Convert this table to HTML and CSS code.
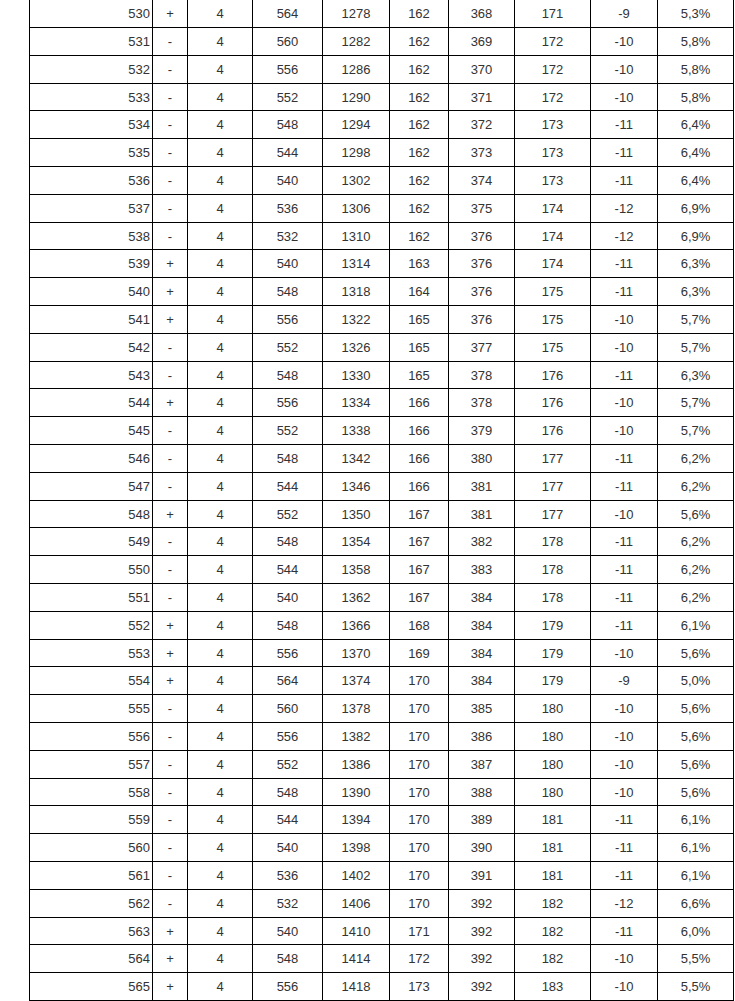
FILE: index.html
```html
<!DOCTYPE html>
<html lang="ru">
<head>
<meta charset="utf-8">
<title>Таблица</title>
<link rel="stylesheet" href="styles.css">
</head>
<body>
<div class="page">
<table class="data">
<colgroup>
<col class="c1"><col class="c2"><col class="c3"><col class="c4"><col class="c5"><col class="c6"><col class="c7"><col class="c8"><col class="c9"><col class="c10">
</colgroup>
<tbody>
<tr><td class="num">530</td><td>+</td><td>4</td><td>564</td><td>1278</td><td>162</td><td>368</td><td>171</td><td>-9</td><td>5,3%</td></tr>
<tr><td class="num">531</td><td>-</td><td>4</td><td>560</td><td>1282</td><td>162</td><td>369</td><td>172</td><td>-10</td><td>5,8%</td></tr>
<tr><td class="num">532</td><td>-</td><td>4</td><td>556</td><td>1286</td><td>162</td><td>370</td><td>172</td><td>-10</td><td>5,8%</td></tr>
<tr><td class="num">533</td><td>-</td><td>4</td><td>552</td><td>1290</td><td>162</td><td>371</td><td>172</td><td>-10</td><td>5,8%</td></tr>
<tr><td class="num">534</td><td>-</td><td>4</td><td>548</td><td>1294</td><td>162</td><td>372</td><td>173</td><td>-11</td><td>6,4%</td></tr>
<tr><td class="num">535</td><td>-</td><td>4</td><td>544</td><td>1298</td><td>162</td><td>373</td><td>173</td><td>-11</td><td>6,4%</td></tr>
<tr><td class="num">536</td><td>-</td><td>4</td><td>540</td><td>1302</td><td>162</td><td>374</td><td>173</td><td>-11</td><td>6,4%</td></tr>
<tr><td class="num">537</td><td>-</td><td>4</td><td>536</td><td>1306</td><td>162</td><td>375</td><td>174</td><td>-12</td><td>6,9%</td></tr>
<tr><td class="num">538</td><td>-</td><td>4</td><td>532</td><td>1310</td><td>162</td><td>376</td><td>174</td><td>-12</td><td>6,9%</td></tr>
<tr><td class="num">539</td><td>+</td><td>4</td><td>540</td><td>1314</td><td>163</td><td>376</td><td>174</td><td>-11</td><td>6,3%</td></tr>
<tr><td class="num">540</td><td>+</td><td>4</td><td>548</td><td>1318</td><td>164</td><td>376</td><td>175</td><td>-11</td><td>6,3%</td></tr>
<tr><td class="num">541</td><td>+</td><td>4</td><td>556</td><td>1322</td><td>165</td><td>376</td><td>175</td><td>-10</td><td>5,7%</td></tr>
<tr><td class="num">542</td><td>-</td><td>4</td><td>552</td><td>1326</td><td>165</td><td>377</td><td>175</td><td>-10</td><td>5,7%</td></tr>
<tr><td class="num">543</td><td>-</td><td>4</td><td>548</td><td>1330</td><td>165</td><td>378</td><td>176</td><td>-11</td><td>6,3%</td></tr>
<tr><td class="num">544</td><td>+</td><td>4</td><td>556</td><td>1334</td><td>166</td><td>378</td><td>176</td><td>-10</td><td>5,7%</td></tr>
<tr><td class="num">545</td><td>-</td><td>4</td><td>552</td><td>1338</td><td>166</td><td>379</td><td>176</td><td>-10</td><td>5,7%</td></tr>
<tr><td class="num">546</td><td>-</td><td>4</td><td>548</td><td>1342</td><td>166</td><td>380</td><td>177</td><td>-11</td><td>6,2%</td></tr>
<tr><td class="num">547</td><td>-</td><td>4</td><td>544</td><td>1346</td><td>166</td><td>381</td><td>177</td><td>-11</td><td>6,2%</td></tr>
<tr><td class="num">548</td><td>+</td><td>4</td><td>552</td><td>1350</td><td>167</td><td>381</td><td>177</td><td>-10</td><td>5,6%</td></tr>
<tr><td class="num">549</td><td>-</td><td>4</td><td>548</td><td>1354</td><td>167</td><td>382</td><td>178</td><td>-11</td><td>6,2%</td></tr>
<tr><td class="num">550</td><td>-</td><td>4</td><td>544</td><td>1358</td><td>167</td><td>383</td><td>178</td><td>-11</td><td>6,2%</td></tr>
<tr><td class="num">551</td><td>-</td><td>4</td><td>540</td><td>1362</td><td>167</td><td>384</td><td>178</td><td>-11</td><td>6,2%</td></tr>
<tr><td class="num">552</td><td>+</td><td>4</td><td>548</td><td>1366</td><td>168</td><td>384</td><td>179</td><td>-11</td><td>6,1%</td></tr>
<tr><td class="num">553</td><td>+</td><td>4</td><td>556</td><td>1370</td><td>169</td><td>384</td><td>179</td><td>-10</td><td>5,6%</td></tr>
<tr><td class="num">554</td><td>+</td><td>4</td><td>564</td><td>1374</td><td>170</td><td>384</td><td>179</td><td>-9</td><td>5,0%</td></tr>
<tr><td class="num">555</td><td>-</td><td>4</td><td>560</td><td>1378</td><td>170</td><td>385</td><td>180</td><td>-10</td><td>5,6%</td></tr>
<tr><td class="num">556</td><td>-</td><td>4</td><td>556</td><td>1382</td><td>170</td><td>386</td><td>180</td><td>-10</td><td>5,6%</td></tr>
<tr><td class="num">557</td><td>-</td><td>4</td><td>552</td><td>1386</td><td>170</td><td>387</td><td>180</td><td>-10</td><td>5,6%</td></tr>
<tr><td class="num">558</td><td>-</td><td>4</td><td>548</td><td>1390</td><td>170</td><td>388</td><td>180</td><td>-10</td><td>5,6%</td></tr>
<tr><td class="num">559</td><td>-</td><td>4</td><td>544</td><td>1394</td><td>170</td><td>389</td><td>181</td><td>-11</td><td>6,1%</td></tr>
<tr><td class="num">560</td><td>-</td><td>4</td><td>540</td><td>1398</td><td>170</td><td>390</td><td>181</td><td>-11</td><td>6,1%</td></tr>
<tr><td class="num">561</td><td>-</td><td>4</td><td>536</td><td>1402</td><td>170</td><td>391</td><td>181</td><td>-11</td><td>6,1%</td></tr>
<tr><td class="num">562</td><td>-</td><td>4</td><td>532</td><td>1406</td><td>170</td><td>392</td><td>182</td><td>-12</td><td>6,6%</td></tr>
<tr><td class="num">563</td><td>+</td><td>4</td><td>540</td><td>1410</td><td>171</td><td>392</td><td>182</td><td>-11</td><td>6,0%</td></tr>
<tr><td class="num">564</td><td>+</td><td>4</td><td>548</td><td>1414</td><td>172</td><td>392</td><td>182</td><td>-10</td><td>5,5%</td></tr>
<tr><td class="num">565</td><td>+</td><td>4</td><td>556</td><td>1418</td><td>173</td><td>392</td><td>183</td><td>-10</td><td>5,5%</td></tr>
</tbody>
</table>
</div>
</body>
</html>
```
FILE: styles.css
```css
html, body {
  margin: 0;
  padding: 0;
  background: #ffffff;
}

.page {
  padding-left: 29px;
}

.data {
  margin-top: -0.8px;
  width: 705px;
  table-layout: fixed;
  border-collapse: separate;
  border-spacing: 0;
  border-left: 1px solid #000;
  border-top: 1px solid #000;
  font-family: "Liberation Sans", Arial, sans-serif;
  font-size: 13px;
  color: #333333;
}

.data td {
  padding: 1px 0 0 0;
  line-height: 25.8px;
  text-align: center;
  border-right: 1px solid #000;
  border-bottom: 1px solid #000;
  white-space: nowrap;
}

.data td.num {
  text-align: right;
  padding-right: 2px;
}

.c1 { width: 123px; }
.c2 { width: 35px; }
.c3 { width: 65px; }
.c4 { width: 70px; }
.c5 { width: 67px; }
.c6 { width: 59px; }
.c7 { width: 66px; }
.c8 { width: 76px; }
.c9 { width: 67px; }
.c10 { width: 76px; }
```
